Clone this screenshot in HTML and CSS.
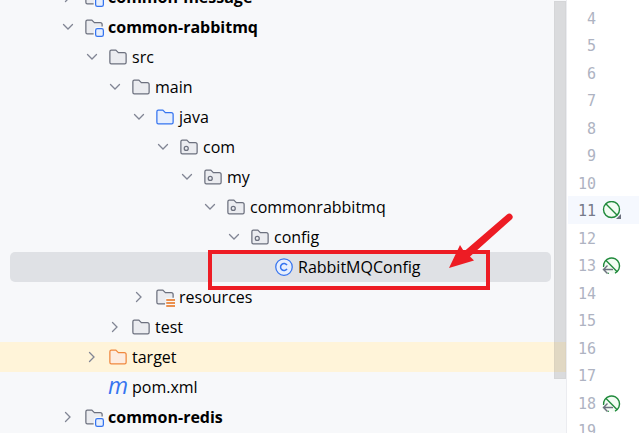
FILE: index.html
```html
<!DOCTYPE html>
<html lang="en">
<head>
    <meta charset="UTF-8">
    <meta name="viewport" content="width=device-width, initial-scale=1.0">
    <title>common-rabbitmq</title>
    <link rel="stylesheet" href="styles.css">
</head>
<body>
    <!-- Shared icons -->
    <svg class="sprite" aria-hidden="true">
        <symbol id="chevron-down" viewBox="0 0 16 16">
            <path d="M3.5 5.5L8 10L12.5 5.5" fill="none" stroke="#818594" stroke-width="1.3" stroke-linecap="round"/>
        </symbol>
        <symbol id="chevron-right" viewBox="0 0 16 16">
            <path d="M5.5 3.5L10 8L5.5 12.5" fill="none" stroke="#818594" stroke-width="1.3" stroke-linecap="round"/>
        </symbol>
        <symbol id="folder" viewBox="0 0 16 16">
            <path d="M8.1 4.35L8.25 4.5H13C13.83 4.5 14.5 5.17 14.5 6V12.13C14.5 12.95 13.93 13.5 13.37 13.5H2.63C2.07 13.5 1.5 12.95 1.5 12.13V3.87C1.5 3.05 2.07 2.5 2.63 2.5H6.12C6.26 2.5 6.39 2.56 6.48 2.65L8.1 4.35Z"/>
        </symbol>
        <symbol id="package" viewBox="0 0 16 16">
            <use href="#folder"/>
            <circle cx="5.8" cy="9.1" r="1.6"/>
        </symbol>
        <symbol id="module" viewBox="0 0 16 16">
            <path d="M8.1 4.35L8.25 4.5H13C13.83 4.5 14.5 5.17 14.5 6V8H10C8.9 8 8 8.9 8 10V13.5H2.63C2.07 13.5 1.5 12.95 1.5 12.13V3.87C1.5 3.05 2.07 2.5 2.63 2.5H6.12C6.26 2.5 6.39 2.56 6.48 2.65L8.1 4.35Z" stroke="none"/>
            <path d="M7.7 13.5H2.63C2.07 13.5 1.5 12.95 1.5 12.13V3.87C1.5 3.05 2.07 2.5 2.63 2.5H6.12C6.26 2.5 6.39 2.56 6.48 2.65L8.1 4.35L8.25 4.5H13C13.83 4.5 14.5 5.17 14.5 6V7.6" fill="none"/>
            <rect x="9.3" y="9.3" width="6.2" height="6.2" rx="1.4" fill="#e7effd" stroke="#3574f0"/>
        </symbol>
        <symbol id="resources" viewBox="0 0 16 16">
            <path d="M8.1 4.35L8.25 4.5H13C13.83 4.5 14.5 5.17 14.5 6V8.5H8.5V13.5H2.63C2.07 13.5 1.5 12.95 1.5 12.13V3.87C1.5 3.05 2.07 2.5 2.63 2.5H6.12C6.26 2.5 6.39 2.56 6.48 2.65L8.1 4.35Z" stroke="none"/>
            <path d="M8 13.5H2.63C2.07 13.5 1.5 12.95 1.5 12.13V3.87C1.5 3.05 2.07 2.5 2.63 2.5H6.12C6.26 2.5 6.39 2.56 6.48 2.65L8.1 4.35L8.25 4.5H13C13.83 4.5 14.5 5.17 14.5 6V8.5" fill="none"/>
            <path d="M9 10.4H16M9 12.8H16M9 15.2H16" fill="none" stroke="#e66d17" stroke-width="1.1"/>
        </symbol>
        <symbol id="class" viewBox="0 0 16 16">
            <circle cx="8" cy="8" r="6.6" fill="#e7effd" stroke="#3574f0"/>
            <path d="M10.4 6.5A2.8 2.8 0 1 0 10.4 9.5" fill="none" stroke="#3574f0" stroke-width="1.2"/>
        </symbol>
        <symbol id="bean" viewBox="0 0 20 20">
            <circle cx="9.5" cy="8.5" r="8" fill="#f2fcf3" stroke="#208a3c" stroke-width="1.4"/>
            <path d="M3.8 2.8L15.2 14.2" stroke="#208a3c" stroke-width="1.4"/>
            <path d="M19 13V18H14Z" fill="#6c707e"/>
        </symbol>
        <symbol id="bean-method" viewBox="0 0 20 20">
            <path d="M2 13A8 8 0 1 1 6.5 17.8H12" fill="#f2fcf3"/>
            <path d="M1.6 11A8 8 0 1 1 13 17.2M4.5 16.2A8 8 0 0 0 7 17.4" fill="none" stroke="#208a3c" stroke-width="1.4"/>
            <path d="M3.8 4.3L15.2 15.7" stroke="#208a3c" stroke-width="1.4"/>
            <path d="M11 13.5H1.5M5.5 9.5L1.5 13.5L5.5 17.5" fill="none" stroke="#f2fcf3" stroke-width="3"/>
            <path d="M11 13.5H1.5M5.5 9.5L1.5 13.5L5.5 17.5" fill="none" stroke="#6c707e" stroke-width="1.4"/>
        </symbol>
    </svg>

    <nav class="project" aria-label="Project">
        <ul class="tree">
            <li class="row module">
                <button class="toggle" aria-label="Expand common-message"><svg><use href="#chevron-right"/></svg></button>
                <svg class="icon"><use href="#module"/></svg>
                <span>common-message</span>
            </li>
            <li class="row module">
                <button class="toggle" aria-label="Collapse common-rabbitmq"><svg><use href="#chevron-down"/></svg></button>
                <svg class="icon"><use href="#module"/></svg>
                <span>common-rabbitmq</span>
            </li>
            <li class="row level-1">
                <button class="toggle" aria-label="Collapse src"><svg><use href="#chevron-down"/></svg></button>
                <svg class="icon"><use href="#folder"/></svg>
                <span>src</span>
            </li>
            <li class="row level-2">
                <button class="toggle" aria-label="Collapse main"><svg><use href="#chevron-down"/></svg></button>
                <svg class="icon"><use href="#folder"/></svg>
                <span>main</span>
            </li>
            <li class="row level-3">
                <button class="toggle" aria-label="Collapse java"><svg><use href="#chevron-down"/></svg></button>
                <svg class="icon source"><use href="#folder"/></svg>
                <span>java</span>
            </li>
            <li class="row level-4">
                <button class="toggle" aria-label="Collapse com"><svg><use href="#chevron-down"/></svg></button>
                <svg class="icon"><use href="#package"/></svg>
                <span>com</span>
            </li>
            <li class="row level-5">
                <button class="toggle" aria-label="Collapse my"><svg><use href="#chevron-down"/></svg></button>
                <svg class="icon"><use href="#package"/></svg>
                <span>my</span>
            </li>
            <li class="row level-6">
                <button class="toggle" aria-label="Collapse commonrabbitmq"><svg><use href="#chevron-down"/></svg></button>
                <svg class="icon"><use href="#package"/></svg>
                <span>commonrabbitmq</span>
            </li>
            <li class="row level-7">
                <button class="toggle" aria-label="Collapse config"><svg><use href="#chevron-down"/></svg></button>
                <svg class="icon"><use href="#package"/></svg>
                <span>config</span>
            </li>
            <li class="row level-8 selected">
                <span class="toggle"></span>
                <svg class="icon"><use href="#class"/></svg>
                <span>RabbitMQConfig</span>
                <div class="marker"></div>
                <svg class="arrow" viewBox="0 0 68 58">
                    <path d="M61 1.5A3.2 3.2 0 0 1 65.5 6.5L24 43.5L28 47.5L3 55L14 32L18 38.5Z"/>
                </svg>
            </li>
            <li class="row level-3">
                <button class="toggle" aria-label="Expand resources"><svg><use href="#chevron-right"/></svg></button>
                <svg class="icon"><use href="#resources"/></svg>
                <span>resources</span>
            </li>
            <li class="row level-2">
                <button class="toggle" aria-label="Expand test"><svg><use href="#chevron-right"/></svg></button>
                <svg class="icon"><use href="#folder"/></svg>
                <span>test</span>
            </li>
            <li class="row level-1 excluded">
                <button class="toggle" aria-label="Expand target"><svg><use href="#chevron-right"/></svg></button>
                <svg class="icon"><use href="#folder"/></svg>
                <span>target</span>
            </li>
            <li class="row level-1">
                <span class="toggle"></span>
                <span class="icon maven">m</span>
                <span>pom.xml</span>
            </li>
            <li class="row module">
                <button class="toggle" aria-label="Expand common-redis"><svg><use href="#chevron-right"/></svg></button>
                <svg class="icon"><use href="#module"/></svg>
                <span>common-redis</span>
            </li>
        </ul>
        <div class="scrollbar"></div>
    </nav>

    <main class="editor">
        <ol class="lines">
            <li><span>4</span></li>
            <li><span>5</span></li>
            <li><span>6</span></li>
            <li><span>7</span></li>
            <li><span>8</span></li>
            <li><span>9</span></li>
            <li><span>10</span></li>
            <li class="current"><span>11</span><svg><use href="#bean"/></svg></li>
            <li><span>12</span></li>
            <li><span>13</span><svg><use href="#bean-method"/></svg></li>
            <li><span>14</span></li>
            <li><span>15</span></li>
            <li><span>16</span></li>
            <li><span>17</span></li>
            <li><span>18</span><svg><use href="#bean-method"/></svg></li>
            <li><span>19</span></li>
        </ol>
    </main>
</body>
</html>
```
FILE: styles.css
```css
* { margin: 0; padding: 0; box-sizing: border-box; }
body {
    display: flex;
    height: 100vh;
    overflow: hidden;
    background: #fff;
    color: #000;
    font-family: "Open Sans", "Noto Sans", sans-serif;
    font-size: 16px;
}
ul, ol { list-style: none; }
.sprite {
    position: absolute;
    width: 0;
    height: 0;
}

/* Project tree */
.project {
    position: relative;
    flex: 1;
    overflow: hidden;
    background: #f7f8fa;
}
.tree { margin-top: -18px; }
.row {
    display: flex;
    align-items: center;
    height: 30px;
    padding-left: 60px;
    line-height: 30px;
    white-space: nowrap;
}
.module { font-weight: bold; }
.level-1 { padding-left: 84px; }
.level-2 { padding-left: 107px; }
.level-3 { padding-left: 131px; }
.level-4 { padding-left: 155px; }
.level-5 { padding-left: 179px; }
.level-6 { padding-left: 202px; }
.level-7 { padding-left: 226px; }
.level-8 { padding-left: 250px; }
.toggle {
    width: 16px;
    height: 16px;
    margin-right: 8px;
    border: none;
    background: none;
}
.toggle svg {
    display: block;
    width: 16px;
    height: 16px;
}
.icon {
    flex: none;
    width: 20px;
    height: 20px;
    margin-right: 4px;
    fill: #ebecf0;
    stroke: #6c707e;
}
.source {
    fill: #e7effd;
    stroke: #3574f0;
}
.maven {
    color: #3574f0;
    font-size: 23px;
    font-style: italic;
    line-height: 16px;
}
.selected {
    position: relative;
    margin: 0 15px 0 10px;
    padding-left: 240px;
    border-radius: 5px;
    background: #dfe1e5;
}
.excluded { background: #fff4d9; }
.excluded .icon {
    fill: #fdece0;
    stroke: #f0883e;
}
.scrollbar {
    position: absolute;
    top: 1px;
    right: 0;
    width: 12px;
    height: 378px;
    border: 1px solid rgba(110, 110, 110, 0.04);
    background: rgba(120, 120, 120, 0.22);
}

/* Red annotation over the selected class */
.marker {
    position: absolute;
    top: -2px;
    left: 198px;
    width: 282px;
    height: 40px;
    border: 4px solid #ed1c24;
}
.arrow {
    position: absolute;
    top: -39px;
    left: 436px;
    width: 68px;
    height: 58px;
    fill: #ed1c24;
}

/* Editor gutter */
.editor {
    width: 73px;
    padding-top: 4px;
    border-left: 1px solid #ebecf0;
}
.lines li {
    display: flex;
    align-items: center;
    height: 27px;
    margin-left: 1px;
    padding-top: 2px;
    color: #aeb3c2;
    font-family: "DejaVu Sans Mono", monospace;
    font-size: 15px;
}
.lines li:nth-child(even) { height: 28px; }
.lines span {
    width: 28px;
    margin-right: 6px;
    text-align: right;
}
.lines svg {
    width: 20px;
    height: 20px;
}
.lines .current {
    background: #f5f8fe;
    color: #767a8a;
}
```
